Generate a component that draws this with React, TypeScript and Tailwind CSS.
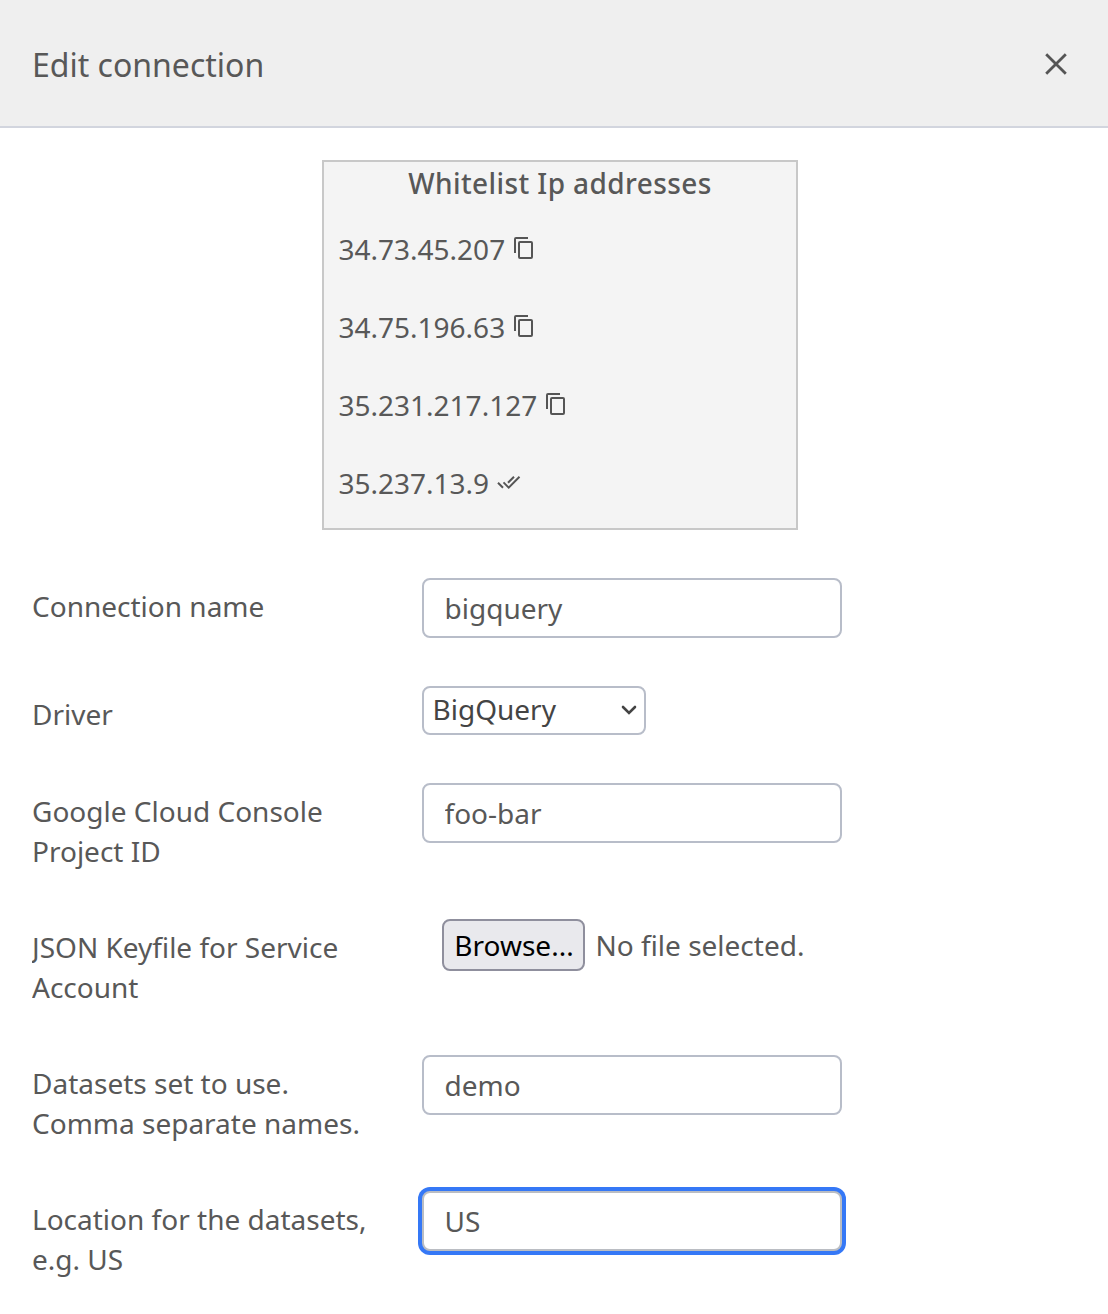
import React from 'react';

const Copy = () => (
  <svg className="mb-[3px] ml-[9px] h-[22px] w-[19px] shrink-0" viewBox="0 0 19 22" fill="none" stroke="#555" strokeWidth="2">
    <path d="M1 16V2Q1 1 2 1H14" />
    <rect x="5" y="5" width="13" height="16" rx="1" />
  </svg>
);

const Checks = () => (
  <svg className="mb-[3px] ml-[7.5px] h-[14px] w-6 shrink-0" viewBox="0 0 24 14" fill="none" stroke="#555" strokeWidth="2">
    <path d="M1 7.7l5 5M6.5 7.4l5.2 5.2L22.5 1.8M11 7.7l6-6" />
  </svg>
);

const ips = ['34.73.45.207', '34.75.196.63', '35.231.217.127', '35.237.13.9'];

function Row({ lines, className, children }: { lines: string[]; className: string; children: React.ReactNode }) {
  return (
    <div className={`flex items-start ${className}`}>
      <div className="w-[390px] shrink-0 overflow-hidden pt-[8px] leading-[40px]">
        {lines.map((l) => <div key={l}>{l}</div>)}
      </div>
      {children}
    </div>
  );
}

function Field({ value, focused = false }: { value: string; focused?: boolean }) {
  return (
    <input
      defaultValue={value}
      className={`h-[60px] w-[420px] rounded-[8px] border-2 bg-white px-[20.5px] outline-none ${focused ? 'border-[#babdc3] ring-4 ring-[#3578f6]' : 'border-[#b8bdc9]'}`}
    />
  );
}

export default function App() {
  return (
    <div className="h-[1314px] w-[1108px] overflow-hidden bg-white font-['Noto_Sans',sans-serif] text-[28px] text-[#585858]">
      <header className="flex h-32 items-center justify-between border-b-2 border-[#d2d5de] bg-[#efefef] pl-8 pr-[40px] pt-[2px]">
        <h1 className="pt-[2px] text-[32px] leading-10">Edit connection</h1>
        <svg className="h-6 w-6" viewBox="0 0 24 24" stroke="#555" strokeWidth="2.8"><path d="M2.2 2.2l19.6 19.6M21.8 2.2L2.2 21.8" /></svg>
      </header>
      <section className="ml-[322px] mt-8 h-[370px] w-[476px] border-2 border-[#c8c8c8] bg-[#f4f4f4]">
        <h2 className="h-[48px] text-center font-medium leading-[42px] tracking-[0.4px]">Whitelist Ip addresses</h2>
        {ips.map((ip, i) => (
          <div key={ip} className="flex h-[78px] items-center pl-[14.5px]">
            <span>{ip}</span>{i === 3 ? <Checks /> : <Copy />}
          </div>
        ))}
      </section>
      <form className="pl-8 pt-12">
        <Row lines={['Connection name']} className="h-[108px]"><Field value="bigquery" /></Row>
        <Row lines={['Driver']} className="h-[97px]">
          <div className="flex h-[49px] w-[224px] items-center justify-between rounded-[8px] border-2 border-[#b8bdc9] pb-[3px] pl-[8.5px] pr-[7px] text-[#444]">
            <span>BigQuery</span>
            <svg className="h-4 w-4" viewBox="0 0 16 16" fill="none" stroke="#444" strokeWidth="2.6" strokeLinecap="round"><path d="M2 6L8 12L14 6" /></svg>
          </div>
        </Row>
        <Row lines={['Google Cloud Console', 'Project ID']} className="h-[136px]"><Field value="foo-bar" /></Row>
        <Row lines={['JSON Keyfile for Service', 'Account']} className="h-[136px]">
          <div className="ml-5 flex items-center">
            <button type="button" className="h-[52px] w-[143px] rounded-[8px] border-2 border-[#8f8f9d] bg-[#e9e9ed] pl-[1px] text-black">Browse...</button>
            <span className="ml-[10.5px]">No file selected.</span>
          </div>
        </Row>
        <Row lines={['Datasets set to use.', 'Comma separate names.']} className="h-[136px]"><Field value="demo" /></Row>
        <Row lines={['Location for the datasets,', 'e.g. US']} className="h-[136px]"><Field value="US" focused /></Row>
      </form>
    </div>
  );
}
